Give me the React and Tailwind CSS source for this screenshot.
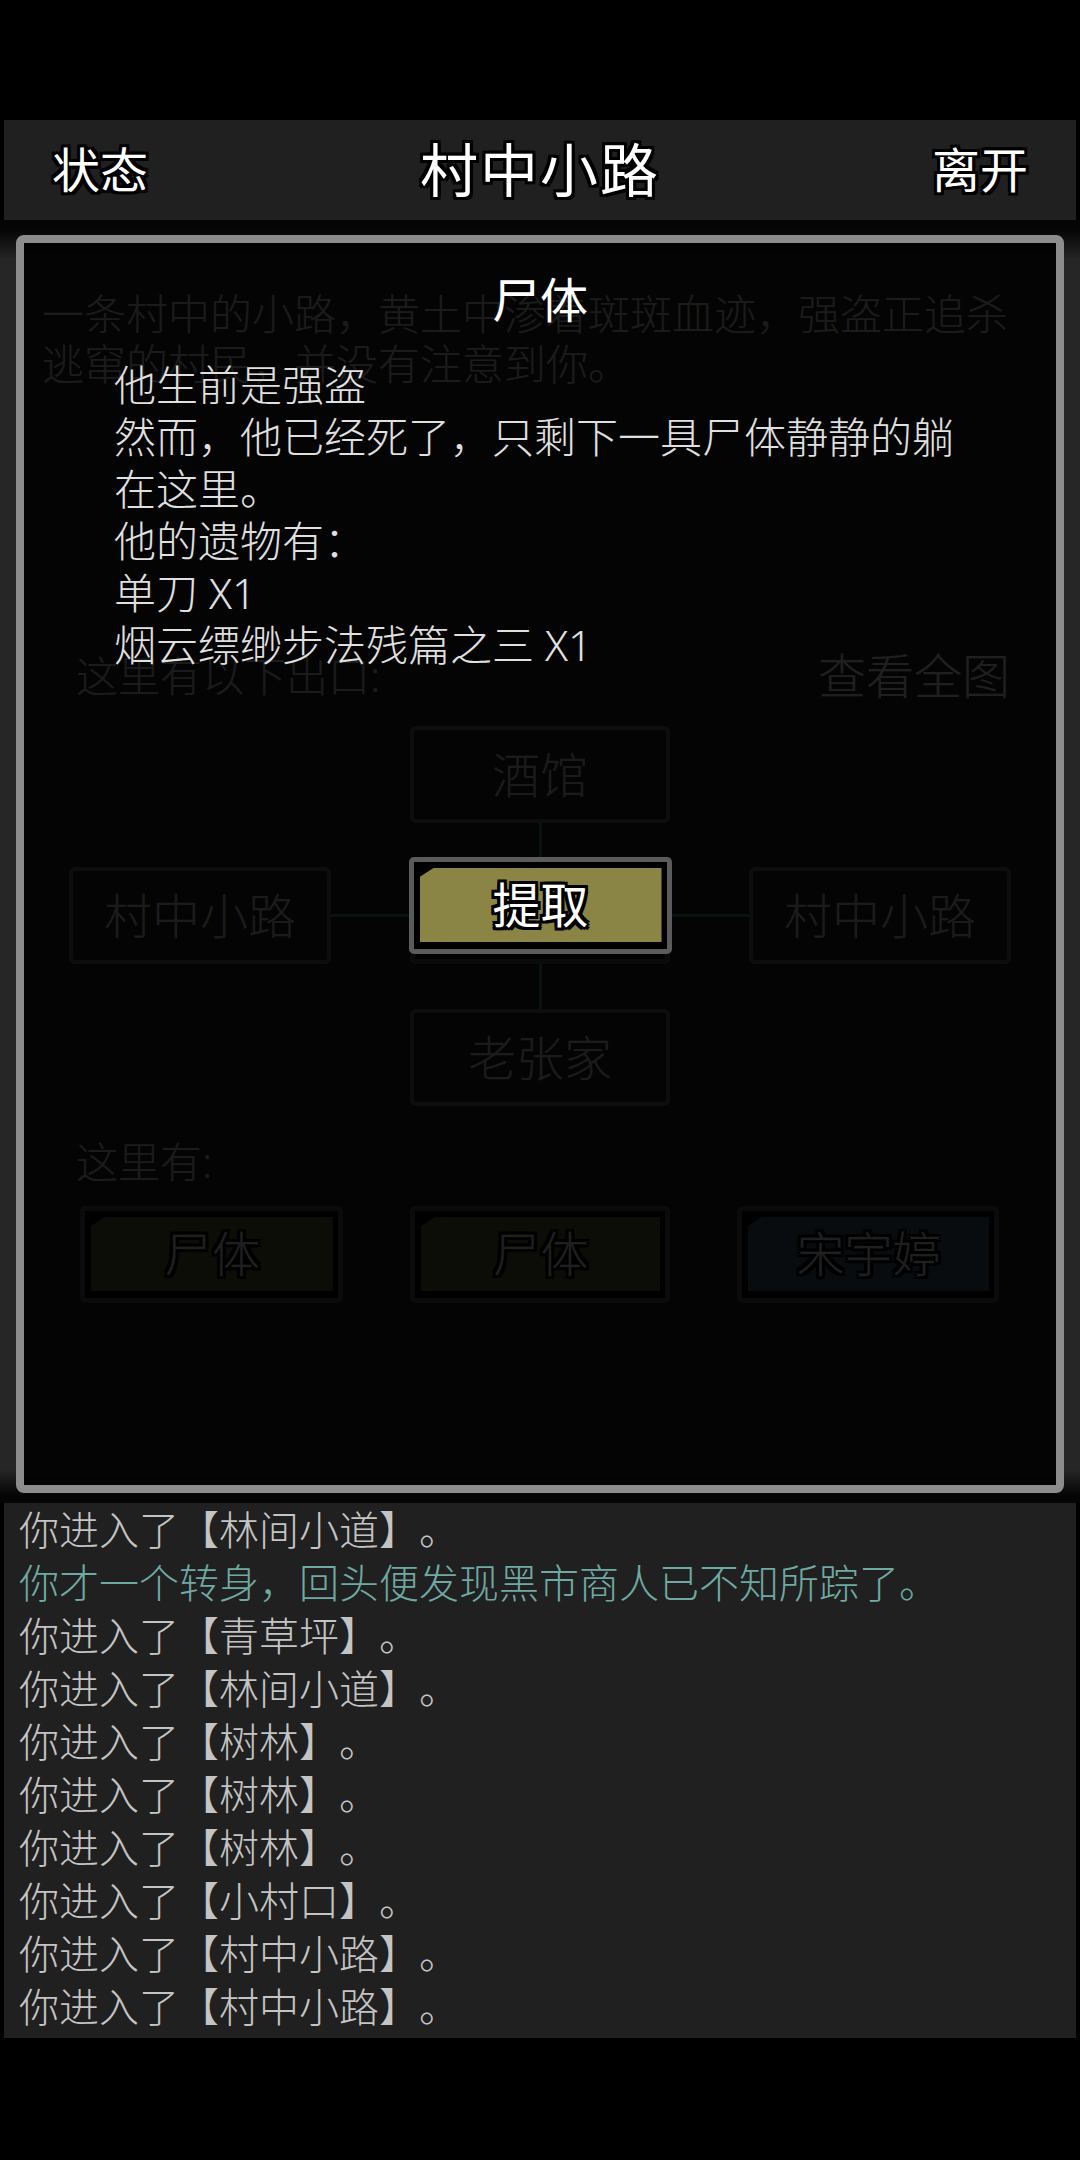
import React from 'react'

const FONT = "font-['Noto_Sans','Noto_Sans_CJK_SC',sans-serif] [text-spacing-trim:space-all]"
const OUTLINE =
  '[text-shadow:-3px_-3px_0_#000,3px_-3px_0_#000,-3px_3px_0_#000,3px_3px_0_#000,0_-3px_0_#000,0_3px_0_#000,-3px_0_0_#000,3px_0_0_#000]'

const LOG = [
  { text: '你进入了【林间小道】。' },
  { text: '你才一个转身，回头便发现黑市商人已不知所踪了。', hint: true },
  { text: '你进入了【青草坪】。' },
  { text: '你进入了【林间小道】。' },
  { text: '你进入了【树林】。' },
  { text: '你进入了【树林】。' },
  { text: '你进入了【树林】。' },
  { text: '你进入了【小村口】。' },
  { text: '你进入了【村中小路】。' },
  { text: '你进入了【村中小路】。' },
]

const LOOT = ['他生前是强盗', '然而，他已经死了，只剩下一具尸体静静的躺在这里。', '他的遗物有：', '单刀 X1', '烟云缥缈步法残篇之三 X1']

function FrameButton({ label, fill, className = '' }) {
  return (
    <div className={`rounded-[5px] border-[5px] border-[#5b5b5b] bg-black pt-[6px] pl-[6px] pr-[5px] pb-[7px] ${className}`}>
      <div
        className={`h-full flex items-center justify-center [clip-path:polygon(14px_0,100%_0,100%_100%,0_100%,0_9px)] ${fill}`}
      >
        <span className={`text-[48px] leading-none text-white ${OUTLINE}`}>{label}</span>
      </div>
    </div>
  )
}

function ExitBox({ label }) {
  return (
    <div className="flex items-center justify-center rounded-[6px] border-[4px] border-[#6c6c6c] text-[48px] font-light text-[#dcdcdc]">
      {label}
    </div>
  )
}

function HLine() {
  return (
    <div className="flex items-center">
      <div className="h-[3px] w-full bg-[#3a9a9a]" />
    </div>
  )
}

function VLine() {
  return (
    <div className="flex justify-center">
      <div className="w-[3px] h-full bg-[#3a9a9a]" />
    </div>
  )
}

// the room page that sits under the dialog
function RoomPage() {
  return (
    <div className="pt-[69px] font-light">
      <p className="px-[42px] text-[42px] leading-[50px] text-[#dcdcdc]">
        一条村中的小路，黄土中渗着斑斑血迹，强盗正追杀逃窜的村民，并没有注意到你。
      </p>

      <div className="mt-[262px] flex items-center justify-between pl-[76px] pr-[70px] leading-[50px]">
        <span className="text-[42px] text-[#dcdcdc]">这里有以下出口:</span>
        <span className="text-[48px] text-white">查看全图</span>
      </div>

      <div className="mt-[25px] ml-[69px] grid grid-cols-[262px_79px_260px_79px_262px] grid-rows-[97px_44px_97px_45px_97px]">
        <div />
        <div />
        <ExitBox label="酒馆" />
        <div />
        <div />

        <div />
        <div />
        <VLine />
        <div />
        <div />

        <ExitBox label="村中小路" />
        <HLine />
        <FrameButton label="村中小路" fill="bg-[#6e6a38]" />
        <HLine />
        <ExitBox label="村中小路" />

        <div />
        <div />
        <VLine />
        <div />
        <div />

        <div />
        <div />
        <ExitBox label="老张家" />
        <div />
        <div />
      </div>

      <div className="mt-[31px] pl-[76px] text-[42px] leading-[50px] text-[#dcdcdc]">这里有:</div>

      <div className="mt-[19px] ml-[80px] grid grid-cols-[263px_260px_262px] gap-x-[67px] h-[97px]">
        <FrameButton label="尸体" fill="bg-[#6e6a38]" />
        <FrameButton label="尸体" fill="bg-[#6e6a38]" />
        <FrameButton label="宋宇婷" fill="bg-[#4f6678]" />
      </div>
    </div>
  )
}

function CorpseDialog() {
  return (
    <div className="absolute top-[15px] left-[16px] right-[16px] bottom-[10px] rounded-[8px] border-[8px] border-[#8c8c8c] bg-black/[0.88]">
      <div className="pt-[31px] text-center text-[48px] leading-[52px] text-white">尸体</div>
      <div className="mt-[33px] px-[90px] text-[42px] leading-[52px] font-light text-[#e0e0e0]">
        {LOOT.map((line, i) => (
          <div key={i}>{line}</div>
        ))}
      </div>
      <FrameButton label="提取" fill="bg-[#8a8545]" className="mx-auto mt-[186px] w-[263px] h-[97px]" />
    </div>
  )
}

export default function App() {
  return (
    <div className={`w-[1080px] min-h-[2160px] bg-black pt-[120px] ${FONT}`}>
      <div className="mx-[4px] h-[100px] bg-[#202020] flex items-center justify-between px-[48px] text-white">
        <span className={`text-[48px] leading-none ${OUTLINE}`}>状态</span>
        <span className={`text-[58px] leading-none tracking-[2px] ${OUTLINE}`}>村中小路</span>
        <span className={`text-[48px] leading-none ${OUTLINE}`}>离开</span>
      </div>

      <div className="relative h-[1283px] bg-[linear-gradient(to_bottom,#050505_10px,#262626_40px,#262626_1250px,#050505_1275px)]">
        <RoomPage />
        <CorpseDialog />
      </div>

      <div className="mx-[4px] h-[535px] bg-[#202020] pl-[15px] pt-[0px] font-light">
        {LOG.map((l, i) => (
          <div
            key={i}
            className={`text-[40px] leading-[53px] ${l.hint ? 'text-[#6fa9a3]' : 'text-[#c4c4c4]'}`}
          >
            {l.text}
          </div>
        ))}
      </div>
    </div>
  )
}
